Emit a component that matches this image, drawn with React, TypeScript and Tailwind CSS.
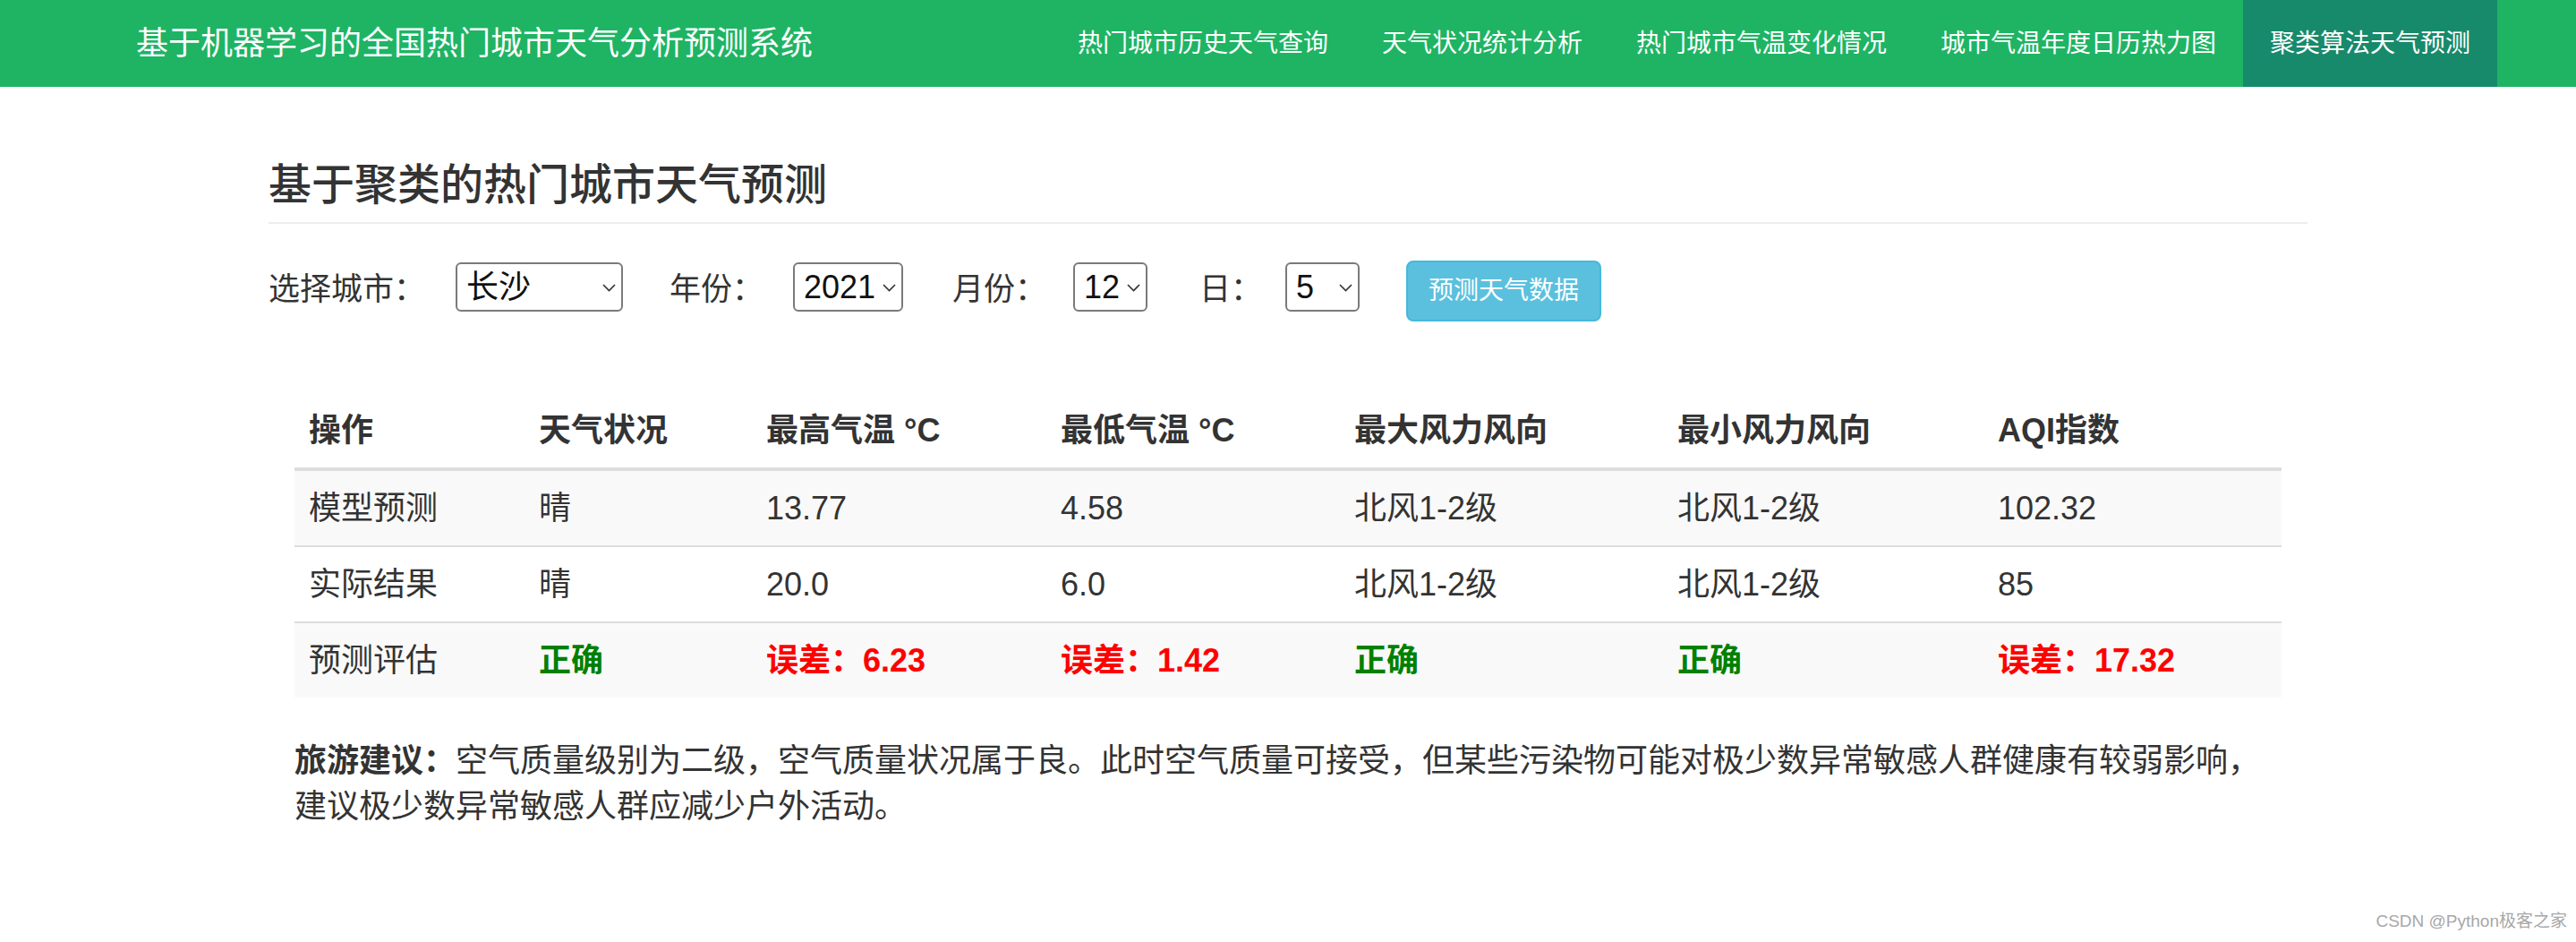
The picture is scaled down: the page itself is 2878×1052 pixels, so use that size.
import React from "react";

const navItems = [
    "热门城市历史天气查询",
    "天气状况统计分析",
    "热门城市气温变化情况",
    "城市气温年度日历热力图",
    "聚类算法天气预测",
];

interface ISelectProps {
    width: string;
    value: string;
    options: string[];
}

const Select: React.FC<ISelectProps> = ({ width, value, options }) => {
    return (
        <div className={`relative mt-[2px] h-[55px] shrink-0 ${width}`}>
            <select
                defaultValue={value}
                className="h-full w-full appearance-none rounded-[6px] border-2 border-[#7a7a7a] bg-white pl-[10px] text-[36px] leading-[51px] text-[#111] outline-none"
            >
                {options.map((o) => (
                    <option key={o} value={o}>{o}</option>
                ))}
            </select>
            <svg className="pointer-events-none absolute right-[8px] top-[24px]" width="15" height="9" viewBox="0 0 15 9">
                <polyline points="1,1 7.5,7.5 14,1" fill="none" stroke="#333" strokeWidth="1.6"/>
            </svg>
        </div>
    )
}

type Cell = { text: string; tone?: "ok" | "err" };

const rows: { cells: Cell[]; striped: boolean }[] = [
    {
        striped: true,
        cells: [
            { text: "模型预测" }, { text: "晴" }, { text: "13.77" }, { text: "4.58" },
            { text: "北风1-2级" }, { text: "北风1-2级" }, { text: "102.32" },
        ],
    },
    {
        striped: false,
        cells: [
            { text: "实际结果" }, { text: "晴" }, { text: "20.0" }, { text: "6.0" },
            { text: "北风1-2级" }, { text: "北风1-2级" }, { text: "85" },
        ],
    },
    {
        striped: true,
        cells: [
            { text: "预测评估" }, { text: "正确", tone: "ok" }, { text: "误差：6.23", tone: "err" },
            { text: "误差：1.42", tone: "err" }, { text: "正确", tone: "ok" }, { text: "正确", tone: "ok" },
            { text: "误差：17.32", tone: "err" },
        ],
    },
];

const toneClass = (tone?: "ok" | "err") => {
    if (tone === "ok") return "font-bold text-[#008000]";
    if (tone === "err") return "font-bold text-[#ff0000]";
    return "";
}

const App: React.FC = () => {
    return (
        <div className="relative h-[1052px] w-full overflow-hidden bg-white font-['Liberation_Sans','Noto_Sans_CJK_SC',sans-serif] text-[#333]">
            {/* top bar */}
            <nav className="flex h-[97px] items-stretch bg-[#1eb464] text-white">
                <div className="ml-[122px] flex items-center px-[30px] text-[36px]">
                    基于机器学习的全国热门城市天气分析预测系统
                </div>
                <ul className="ml-auto mr-[88px] flex items-stretch">
                    {navItems.map((item, i) => (
                        <li key={item}
                            className={'flex items-center px-[30px] text-[28px] ' + (i === navItems.length - 1 ? 'bg-[#178a6b]' : '')}>
                            {item}
                        </li>
                    ))}
                </ul>
            </nav>

            <div className="mx-auto w-[2278px]">
                <div className="mt-[83px] border-b-2 border-[#eee] pb-[15px]">
                    <h3 className="text-[48px] font-medium leading-[53px]">基于聚类的热门城市天气预测</h3>
                </div>

                <div className="mt-[41px] flex items-start text-[35px]">
                    <label className="mt-[6px] w-[209px] shrink-0 leading-[51px]">选择城市：</label>
                    <Select width="w-[187px]" value="长沙" options={["长沙", "北京", "上海", "广州", "深圳"]}/>
                    <label className="ml-[52px] mt-[6px] w-[138px] shrink-0 leading-[51px]">年份：</label>
                    <Select width="w-[123px]" value="2021" options={["2019", "2020", "2021"]}/>
                    <label className="ml-[55px] mt-[6px] w-[135px] shrink-0 leading-[51px]">月份：</label>
                    <Select width="w-[83px]" value="12" options={["10", "11", "12"]}/>
                    <label className="ml-[58px] mt-[6px] w-[96px] shrink-0 leading-[51px]">日：</label>
                    <Select width="w-[83px]" value="5" options={["3", "4", "5", "6"]}/>
                    <button type="button"
                            className="ml-[52px] h-[68px] w-[218px] rounded-[8px] border-2 border-[#46b8da] bg-[#5bc0de] text-[28px] text-white">
                        预测天气数据
                    </button>
                </div>

                <table className="ml-[29px] mt-[80px] w-[2220px] table-fixed border-collapse text-[36px] leading-[51px]">
                    <thead>
                        <tr>
                            <th className="w-[257px] border-b-4 border-[#ddd] p-[16px] text-left font-bold">操作</th>
                            <th className="w-[254px] border-b-4 border-[#ddd] p-[16px] text-left font-bold">天气状况</th>
                            <th className="w-[329px] border-b-4 border-[#ddd] p-[16px] text-left font-bold">最高气温 °C</th>
                            <th className="w-[328px] border-b-4 border-[#ddd] p-[16px] text-left font-bold">最低气温 °C</th>
                            <th className="w-[361px] border-b-4 border-[#ddd] p-[16px] text-left font-bold">最大风力风向</th>
                            <th className="w-[358px] border-b-4 border-[#ddd] p-[16px] text-left font-bold">最小风力风向</th>
                            <th className="w-[333px] border-b-4 border-[#ddd] p-[16px] text-left font-bold">AQI指数</th>
                        </tr>
                    </thead>
                    <tbody>
                        {rows.map((row, r) => (
                            <tr key={r} className={row.striped ? 'bg-[#f9f9f9]' : 'bg-white'}>
                                {row.cells.map((c, i) => (
                                    <td key={i} className={'border-t-2 border-[#ddd] p-[16px] ' + toneClass(c.tone)}>
                                        {c.text}
                                    </td>
                                ))}
                            </tr>
                        ))}
                    </tbody>
                </table>

                <p className="ml-[29px] mt-[45px] w-[2220px] text-[36px] leading-[51px]">
                    <b>旅游建议：</b>空气质量级别为二级，空气质量状况属于良。此时空气质量可接受，但某些污染物可能对极少数异常敏感人群健康有较弱影响，建议极少数异常敏感人群应减少户外活动。
                </p>
            </div>

            <div className="absolute bottom-[9px] right-[10px] text-[19px] text-[#a8a8a8]">CSDN @Python极客之家</div>
        </div>
    )
}

export default App
